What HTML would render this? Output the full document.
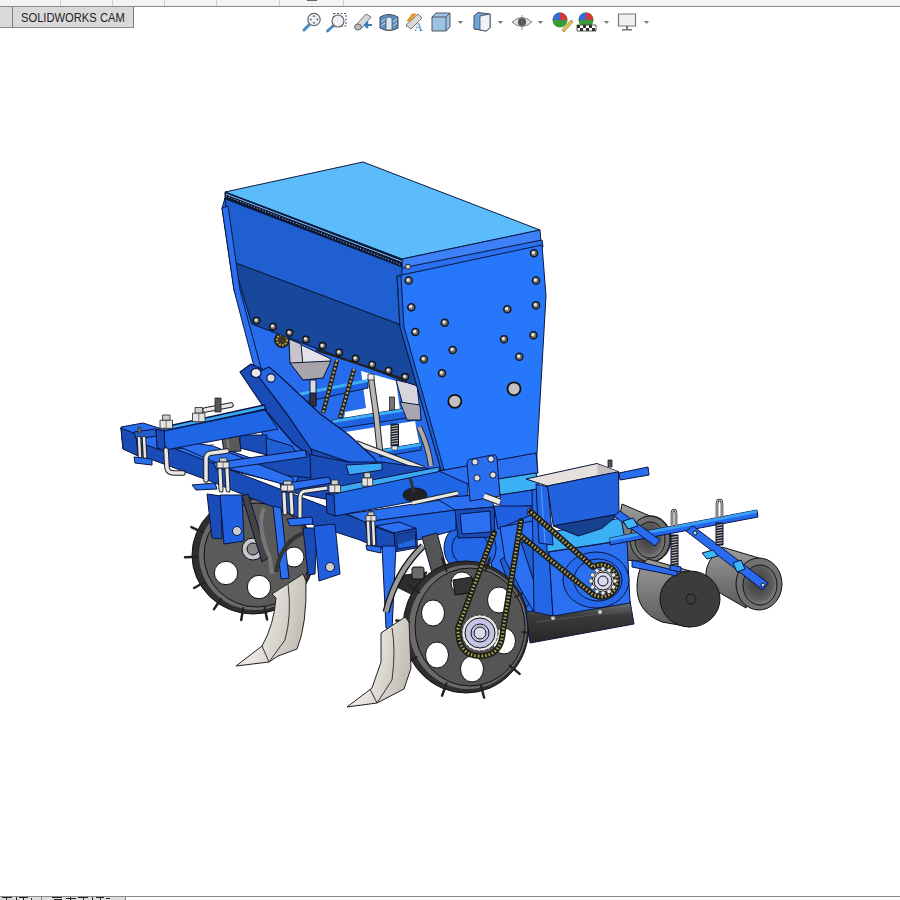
<!DOCTYPE html>
<html><head><meta charset="utf-8">
<style>
html,body{margin:0;padding:0;background:#fff;width:900px;height:900px;overflow:hidden;font-family:"Liberation Sans",sans-serif;}
#top{position:absolute;left:0;top:0;width:900px;height:6px;background:#f3f3f3;border-bottom:1px solid #8a8a8a;}
#tab0{position:absolute;left:0;top:7px;width:12px;height:20px;background:#d9d9d9;border-right:1px solid #7a7a7a;border-bottom:1px solid #8a8a8a;}
#tab{position:absolute;left:13px;top:7px;width:120px;height:20px;background:#d9d9d9;border-right:1px solid #7a7a7a;border-bottom:1px solid #8a8a8a;}
#tabtxt{position:absolute;left:21px;top:10px;font-size:13px;line-height:15px;color:#1e1e1e;white-space:nowrap;transform-origin:0 0;transform:scaleX(0.86);}
#bot{position:absolute;left:0;top:896px;width:900px;height:4px;background:#fff;border-top:1px solid #8a8a8a;}
svg{position:absolute;left:0;top:0;}
</style></head><body>
<div id="top"></div>
<div id="tab0"></div>
<div style="position:absolute;top:0;left:60px;width:1px;height:6px;background:#cfcfcf"></div>
<div style="position:absolute;top:0;left:112px;width:1px;height:6px;background:#cfcfcf"></div>
<div style="position:absolute;top:0;left:164px;width:1px;height:6px;background:#cfcfcf"></div>
<div style="position:absolute;top:0;left:216px;width:1px;height:6px;background:#cfcfcf"></div>
<div style="position:absolute;top:0;left:279px;width:1px;height:6px;background:#cfcfcf"></div>
<div style="position:absolute;top:0;left:343px;width:1px;height:6px;background:#cfcfcf"></div>
<div style="position:absolute;top:0;left:307px;width:10px;height:1px;background:#666"></div>
<div id="tab"></div><div id="tabtxt">SOLIDWORKS CAM</div>
<svg width="900" height="900" viewBox="0 0 900 900" stroke-linejoin="round">
<!-- TOOLBAR ICONS -->
<g id="icons">
<g>
<line x1="310" y1="24" x2="304" y2="30" stroke="#4a88c0" stroke-width="3" stroke-linecap="round"/>
<circle cx="314" cy="19.5" r="6.2" fill="#eef2f6" stroke="#666" stroke-width="1.2"/>
<path d="M314,15 l-1.5,1.8 h3 z M314,24 l-1.5,-1.8 h3 z M309.5,19.5 l1.8,-1.5 v3 z M318.5,19.5 l-1.8,-1.5 v3 z" fill="#555"/>
</g>
<g>
<rect x="333.5" y="13.5" width="12.5" height="12.5" fill="none" stroke="#555" stroke-width="1" stroke-dasharray="2,1.5"/>
<line x1="333" y1="26" x2="327.5" y2="31" stroke="#4a88c0" stroke-width="3" stroke-linecap="round"/>
<circle cx="338" cy="21" r="6" fill="#eef2f6" stroke="#666" stroke-width="1.2"/>
</g>
<g>
<path d="M356,25 L366,14 L371,17 L362,28 Z" fill="#d8d8d8" stroke="#777" stroke-width="1"/>
<ellipse cx="358" cy="27" rx="3.5" ry="3" fill="#bbb" stroke="#666"/>
<path d="M372,25 h-6 m2,-3 l-3,3 l3,3" fill="none" stroke="#3a7ab8" stroke-width="2.2"/>
</g>
<g>
<path d="M380,17 Q389,12 398,17 L398,28 Q389,33 380,28 Z" fill="#5a90c0" stroke="#445" stroke-width="1"/>
<path d="M386,18 Q389,16 392,18 L392,30 L386,30 Z" fill="#dfe6ec" stroke="#556" stroke-width="0.8"/>
<path d="M381,22 l4,-3 M381,26 l4,-3 M393,22 l4,-3 M393,26 l4,-3" stroke="#cde" stroke-width="1"/>
</g>
<g>
<path d="M412,14 L407,21 L411,21 L406,27 L416,19 L412,19 L416,14 Z" fill="#f0a020" stroke="#c07010" stroke-width="0.6"/>
<path d="M406,25 L418,14 L422,18 L411,29 Z" fill="#d8d8d8" stroke="#777"/>
<text x="414" y="31" font-family="Liberation Serif,serif" font-size="12" fill="#3a7ab8">A</text>
</g>
<g>
<path d="M432,17 L436,13 L450,13 L450,27 L446,31 L432,31 Z" fill="#9cc4e4" stroke="#556" stroke-width="1"/>
<path d="M432,17 L446,17 L450,13 M446,17 L446,31" fill="none" stroke="#556" stroke-width="1"/>
</g>
<path d="M458,21 h5 l-2.5,3 z" fill="#777"/>
<g>
<path d="M474,16 L478,12.5 L490,14 L490,28 L486,31 L474,29 Z" fill="#6aa6d8" stroke="#445" stroke-width="1"/>
<path d="M480,16 L490,14 L490,28 L486,31 L480,30 Z" fill="#eef3f7" stroke="#445" stroke-width="0.8"/>
</g>
<path d="M498,21 h5 l-2.5,3 z" fill="#777"/>
<g>
<path d="M512,22 Q522,13 532,22 Q522,31 512,22 Z" fill="#e0e0e0" stroke="#888" stroke-width="1"/>
<circle cx="522" cy="22" r="4" fill="#555"/>
<line x1="522" y1="15" x2="522" y2="30" stroke="#777" stroke-width="0.8"/>
</g>
<path d="M538,21 h5 l-2.5,3 z" fill="#777"/>
<g>
<circle cx="560" cy="20" r="7.5" fill="#3a9a3a"/>
<path d="M560,20 L552.5,20 A7.5,7.5 0 0 1 560,12.5 Z" fill="#3a6ad0"/>
<path d="M560,20 L560,12.5 A7.5,7.5 0 0 1 567.5,20 Z" fill="#d03a3a"/>
<path d="M562,30 L571,20 L573,22 L564,32 Z" fill="#f0c040" stroke="#886" stroke-width="0.8"/>
</g>
<g>
<circle cx="586" cy="20" r="7.5" fill="#3a9a3a"/>
<path d="M586,20 L578.5,20 A7.5,7.5 0 0 1 586,12.5 Z" fill="#3a6ad0"/>
<path d="M586,20 L586,12.5 A7.5,7.5 0 0 1 593.5,20 Z" fill="#d03a3a"/>
<rect x="577" y="25" width="19" height="6" fill="#fff" stroke="#333" stroke-width="0.8"/>
<path d="M577,25 h3v3h-3z M583,25 h3v3h-3z M589,25 h3v3h-3z M580,28 h3v3h-3z M586,28 h3v3h-3z M592,28 h3v3h-3z" fill="#333"/>
</g>
<path d="M604,21 h5 l-2.5,3 z" fill="#777"/>
<g>
<rect x="618.5" y="14" width="17" height="12" fill="#f0f0f0" stroke="#777" stroke-width="1.2"/>
<rect x="626" y="26" width="2" height="3" fill="#777"/>
<rect x="622" y="29" width="10" height="1.5" fill="#777"/>
</g>
<path d="M644,21 h5 l-2.5,3 z" fill="#777"/>
</g>
<!-- BACK ROLLERS -->
<defs>
<linearGradient id="gshoe" x1="0" y1="0" x2="1" y2="0.3"><stop offset="0" stop-color="#f4f2ee"/><stop offset="0.5" stop-color="#e8e5df"/><stop offset="1" stop-color="#c4c0b8"/></linearGradient>
<linearGradient id="gcyl" x1="0" y1="0" x2="0" y2="1">
<stop offset="0" stop-color="#9c9c9c"/><stop offset="0.5" stop-color="#7a7a7a"/><stop offset="1" stop-color="#5a5a5a"/>
</linearGradient>
<radialGradient id="gface" cx="0.45" cy="0.45" r="0.6">
<stop offset="0" stop-color="#3a3a3a"/><stop offset="0.7" stop-color="#5e5e5e"/><stop offset="1" stop-color="#8a8a8a"/>
</radialGradient>
</defs>
<g id="rollers" stroke="#111" stroke-width="1">
<path d="M622,504 L650,516 A20,23 0 0 1 652,562 L625,560 Q615,530 622,504 Z" fill="url(#gcyl)"/>
<ellipse cx="650" cy="539" rx="20" ry="23" fill="#6e6e6e"/>
<ellipse cx="650" cy="540" rx="15" ry="18" fill="url(#gface)"/>
<path d="M722,547 L759,558 L746,608 L708,586 Q700,565 722,547 Z" fill="url(#gcyl)"/>
<ellipse cx="759" cy="584" rx="23" ry="26" fill="#707070"/>
<ellipse cx="760" cy="585" rx="17" ry="20" fill="url(#gface)"/>
<path d="M648,559 L690,571 L690,627 L662,622 Q636,612 637,585 Q638,565 648,559 Z" fill="url(#gcyl)"/>
<ellipse cx="690" cy="599" rx="30" ry="28" fill="#3c3c3c"/>
<circle cx="691" cy="599" r="5" fill="none" stroke="#1a1a1a"/>
</g>
<!-- GEARBOX back parts -->
<g id="gearback" stroke="#0a1440" stroke-width="1">
<polygon points="488,512 540,508 560,600 522,615 492,572" fill="#2a6ef0"/>
<polygon points="500,560 524,545 535,600 520,612" fill="#1f5fd0"/>
<circle cx="470" cy="548" r="26" fill="#2366e6"/>
<circle cx="470" cy="548" r="18" fill="none"/>
</g>
<!-- HOPPER -->
<g id="hopper" stroke="#0a1a40" stroke-width="1">
<polygon points="225,198 233,262 252,324 417,386 446,472 330,475 262,440 262,372 234,290 222,208" fill="#276cec"/>
<polygon points="361,371 396,381 400,410 344,419.5 345,412 366,408" fill="#fff" stroke="none"/>
<polygon points="345,432 415,421 420,447 384,451 357,445" fill="#fff" stroke="none"/>
<polygon points="298,394 368,380 368,388 300,403" fill="#1f62e0"/>
<polygon points="298,393 368,379 368,382 298,396" fill="#3fb0f5" stroke="none"/>
<polygon points="333,420 407,408 407,418 335,429" fill="#1f62e0"/>
<polygon points="333,420 407,408 407,411 333,423" fill="#3fb0f5" stroke="none"/>
<polygon points="379,450 421,443 421,450 380,457" fill="#1f62e0"/>
<polygon points="379,450 421,443 421,446 379,453" fill="#3fb0f5" stroke="none"/>
<circle cx="282" cy="340" r="7.5" fill="#3a3520" stroke="#111"/><circle cx="282" cy="340" r="5" fill="none" stroke="#b0a460" stroke-width="2" stroke-dasharray="1.5,1.5"/>
<polygon points="289,339 331,359 323,378 303,380 290,363" fill="#e4e2e8"/>
<polygon points="289,339 301,344 303,366 290,363" fill="#c8c6cc"/>
<polygon points="290,363 331,361 323,378 303,380" fill="#a8a4ac"/>
<rect x="310" y="380" width="6" height="26" fill="#ddd"/>
<rect x="310" y="393" width="6" height="13" fill="#333"/>
<g stroke="#222" stroke-width="4.5"><line x1="337" y1="360" x2="323" y2="413"/><line x1="354" y1="369" x2="340" y2="418"/></g><g stroke="#b8ae70" stroke-width="2" stroke-dasharray="2,2"><line x1="337" y1="360" x2="323" y2="413"/><line x1="354" y1="369" x2="340" y2="418"/></g>
<path d="M371,378 Q377,415 380,452" fill="none" stroke="#222" stroke-width="6.5"/>
<path d="M371,378 Q377,415 380,452" fill="none" stroke="#b8b8b8" stroke-width="4.5"/>
<rect x="368" y="374" width="6" height="6" fill="#eee" stroke="#222" stroke-width="0.8"/>
<polygon points="396,380 417,385 421,420 407,420" fill="#d8d6dc"/>
<polygon points="400,402 420,405 421,420 407,420" fill="#a8a6b0"/>
<path d="M419,427 Q428,445 431,466" fill="none" stroke="#222" stroke-width="6"/>
<path d="M419,427 Q428,445 431,466" fill="none" stroke="#aaa" stroke-width="4"/>
<rect x="391" y="424" width="7.5" height="22" fill="#222"/><line x1="391.5" y1="426.5" x2="398" y2="425.5" stroke="#ddd" stroke-width="0.9"/><line x1="391.5" y1="429.0" x2="398" y2="428.0" stroke="#ddd" stroke-width="0.9"/><line x1="391.5" y1="431.5" x2="398" y2="430.5" stroke="#ddd" stroke-width="0.9"/><line x1="391.5" y1="434.0" x2="398" y2="433.0" stroke="#ddd" stroke-width="0.9"/><line x1="391.5" y1="436.5" x2="398" y2="435.5" stroke="#ddd" stroke-width="0.9"/><line x1="391.5" y1="439.0" x2="398" y2="438.0" stroke="#ddd" stroke-width="0.9"/><line x1="391.5" y1="441.5" x2="398" y2="440.5" stroke="#ddd" stroke-width="0.9"/><line x1="391.5" y1="444.0" x2="398" y2="443.0" stroke="#ddd" stroke-width="0.9"/><rect x="392" y="446" width="5.5" height="4" fill="#e8e8f0" stroke="#222" stroke-width="0.6"/><rect x="389.5" y="397" width="5" height="13" fill="#777" stroke="#222" stroke-width="0.8"/>
<path d="M356,443 L424,469" stroke="#222" stroke-width="6"/>
<path d="M356,443 L424,469" stroke="#e6e6e6" stroke-width="4"/>
<polygon points="225,192 363,162 540,230 402,259" fill="#5cbcfb"/>
<polygon points="402,259 540,230 541,243 402,272" fill="#3d80f7"/>
<polygon points="402,268 542,240 543,247 397,276" fill="#2a70f0"/>
<polygon points="225,192 402,259 402,267 225,199" fill="#0d1838"/>
<line x1="226" y1="194" x2="402" y2="261.5" stroke="#7cc4ff" stroke-width="1"/>
<line x1="226" y1="196" x2="402" y2="265" stroke="#9aa" stroke-width="1.2" stroke-dasharray="1,2"/>
<polygon points="225,199 402,267 401,325 233,262" fill="#1f5fcf"/>
<polygon points="233,262 401,325 417,386 252,324" fill="#17489c"/>
<polygon points="222,208 228,206 240,290 262,372 256,374 234,290" fill="#2a70f0"/>
<line x1="316" y1="350" x2="407" y2="380" stroke="#222" stroke-width="2"/>
<polygon points="397,276 542,245 546,296 537,453 537,472 441,470 400,327" fill="#2677fa"/>
<polygon points="397,276 401,276 404,327 444,470 441,470 400,327" fill="#1f5fd0"/>
<line x1="441" y1="472" x2="537" y2="453"/>
</g>
<g id="bolts"><circle cx="534" cy="253.3" r="3.6" fill="#6e6a6a" stroke="#111" stroke-width="1.3"/><circle cx="533.4" cy="252.70000000000002" r="1.6" fill="#e8e8e8" stroke="none"/><circle cx="408.7" cy="280.5" r="3.6" fill="#6e6a6a" stroke="#111" stroke-width="1.3"/><circle cx="408.09999999999997" cy="279.9" r="1.6" fill="#e8e8e8" stroke="none"/><circle cx="536" cy="280.5" r="3.6" fill="#6e6a6a" stroke="#111" stroke-width="1.3"/><circle cx="535.4" cy="279.9" r="1.6" fill="#e8e8e8" stroke="none"/><circle cx="411.3" cy="307.2" r="3.6" fill="#6e6a6a" stroke="#111" stroke-width="1.3"/><circle cx="410.7" cy="306.59999999999997" r="1.6" fill="#e8e8e8" stroke="none"/><circle cx="536" cy="305.3" r="3.6" fill="#6e6a6a" stroke="#111" stroke-width="1.3"/><circle cx="535.4" cy="304.7" r="1.6" fill="#e8e8e8" stroke="none"/><circle cx="507.3" cy="309.3" r="3.6" fill="#6e6a6a" stroke="#111" stroke-width="1.3"/><circle cx="506.7" cy="308.7" r="1.6" fill="#e8e8e8" stroke="none"/><circle cx="444.7" cy="322.7" r="3.6" fill="#6e6a6a" stroke="#111" stroke-width="1.3"/><circle cx="444.09999999999997" cy="322.09999999999997" r="1.6" fill="#e8e8e8" stroke="none"/><circle cx="415.3" cy="332" r="3.6" fill="#6e6a6a" stroke="#111" stroke-width="1.3"/><circle cx="414.7" cy="331.4" r="1.6" fill="#e8e8e8" stroke="none"/><circle cx="504" cy="339.2" r="3.6" fill="#6e6a6a" stroke="#111" stroke-width="1.3"/><circle cx="503.4" cy="338.59999999999997" r="1.6" fill="#e8e8e8" stroke="none"/><circle cx="533.5" cy="335.2" r="3.6" fill="#6e6a6a" stroke="#111" stroke-width="1.3"/><circle cx="532.9" cy="334.59999999999997" r="1.6" fill="#e8e8e8" stroke="none"/><circle cx="452.7" cy="349.9" r="3.6" fill="#6e6a6a" stroke="#111" stroke-width="1.3"/><circle cx="452.09999999999997" cy="349.29999999999995" r="1.6" fill="#e8e8e8" stroke="none"/><circle cx="423.9" cy="359.2" r="3.6" fill="#6e6a6a" stroke="#111" stroke-width="1.3"/><circle cx="423.29999999999995" cy="358.59999999999997" r="1.6" fill="#e8e8e8" stroke="none"/><circle cx="519.3" cy="356.8" r="3.6" fill="#6e6a6a" stroke="#111" stroke-width="1.3"/><circle cx="518.6999999999999" cy="356.2" r="1.6" fill="#e8e8e8" stroke="none"/><circle cx="442" cy="373.3" r="3.6" fill="#6e6a6a" stroke="#111" stroke-width="1.3"/><circle cx="441.4" cy="372.7" r="1.6" fill="#e8e8e8" stroke="none"/><circle cx="256.6" cy="320.6" r="3.3" fill="#6e6a6a" stroke="#111" stroke-width="1.3"/><circle cx="256.0" cy="320.0" r="1.5" fill="#e8e8e8" stroke="none"/><circle cx="273" cy="326.7" r="3.3" fill="#6e6a6a" stroke="#111" stroke-width="1.3"/><circle cx="272.4" cy="326.09999999999997" r="1.5" fill="#e8e8e8" stroke="none"/><circle cx="289.6" cy="332.8" r="3.3" fill="#6e6a6a" stroke="#111" stroke-width="1.3"/><circle cx="289.0" cy="332.2" r="1.5" fill="#e8e8e8" stroke="none"/><circle cx="306" cy="339.4" r="3.3" fill="#6e6a6a" stroke="#111" stroke-width="1.3"/><circle cx="305.4" cy="338.79999999999995" r="1.5" fill="#e8e8e8" stroke="none"/><circle cx="322.6" cy="345.8" r="3.3" fill="#6e6a6a" stroke="#111" stroke-width="1.3"/><circle cx="322.0" cy="345.2" r="1.5" fill="#e8e8e8" stroke="none"/><circle cx="339.2" cy="352.4" r="3.3" fill="#6e6a6a" stroke="#111" stroke-width="1.3"/><circle cx="338.59999999999997" cy="351.79999999999995" r="1.5" fill="#e8e8e8" stroke="none"/><circle cx="355.6" cy="358.5" r="3.3" fill="#6e6a6a" stroke="#111" stroke-width="1.3"/><circle cx="355.0" cy="357.9" r="1.5" fill="#e8e8e8" stroke="none"/><circle cx="372.2" cy="364.6" r="3.3" fill="#6e6a6a" stroke="#111" stroke-width="1.3"/><circle cx="371.59999999999997" cy="364.0" r="1.5" fill="#e8e8e8" stroke="none"/><circle cx="388.6" cy="370.7" r="3.3" fill="#6e6a6a" stroke="#111" stroke-width="1.3"/><circle cx="388.0" cy="370.09999999999997" r="1.5" fill="#e8e8e8" stroke="none"/><circle cx="405.2" cy="376.8" r="3.3" fill="#6e6a6a" stroke="#111" stroke-width="1.3"/><circle cx="404.59999999999997" cy="376.2" r="1.5" fill="#e8e8e8" stroke="none"/><circle cx="454.8" cy="401.3" r="6.5" fill="#c4c0c0" stroke="#111" stroke-width="1.8"/><circle cx="514" cy="388.8" r="6.5" fill="#c4c0c0" stroke="#111" stroke-width="1.8"/><circle cx="408" cy="266.7" r="2.5" fill="#ccc" stroke="#222"/></g>
<!-- LEVER -->
<g id="lever" stroke="#0a1440" stroke-width="1.2">
<path d="M240,372 L251,364 L262,369 L320,414 L349,436 L379,465 L349,477 L313,458 L294,444 L267,412 Z" fill="#1a4cb8"/>
<path d="M256,373 L269,367 L278,374.5 L320,413.7 L349,435 L374,458 L379,465 L379,469 L349,476 L345,465 L320,454.6 L311,449 L286.6,413.7 Z" fill="#2366e6"/>
<polygon points="311,449 349,462 379,469 349,477 313,460" fill="#1a4cb8"/>
<ellipse cx="256" cy="373" rx="5" ry="4.5" fill="#e8e8e8"/>
<circle cx="271" cy="378" r="4.2" fill="#ddd"/>
</g>
<!-- LEFT WHEEL -->
<g id="lwheel" stroke="#111" stroke-width="1">
<g stroke="#222" stroke-width="2.5" stroke-linecap="round"><line x1="218.0" y1="506.7" x2="214.0" y2="500.9"/><line x1="197.7" y1="530.1" x2="191.4" y2="527.1"/><line x1="192.0" y1="557.1" x2="185.0" y2="557.3"/><line x1="200.2" y1="584.5" x2="194.1" y2="588.0"/><line x1="218.0" y1="603.3" x2="214.0" y2="609.1"/><line x1="242.4" y1="613.1" x2="241.2" y2="620.0"/><line x1="265.7" y1="612.7" x2="267.1" y2="619.6"/><line x1="288.0" y1="603.3" x2="292.0" y2="609.1"/></g>
<ellipse cx="253" cy="555" rx="61" ry="59" fill="#2e2e2e"/>
<ellipse cx="255" cy="555" rx="56" ry="55" fill="#6a6a6a" stroke="none"/>
<ellipse cx="257" cy="555" rx="53" ry="52" fill="#5a5a5a"/>
<g stroke="#222" stroke-width="2"><line x1="221.5" y1="511.6" x2="218.0" y2="506.7"/><line x1="203.2" y1="532.6" x2="197.7" y2="530.1"/><line x1="198.0" y1="556.8" x2="192.0" y2="557.1"/><line x1="205.4" y1="581.5" x2="200.2" y2="584.5"/><line x1="221.5" y1="598.4" x2="218.0" y2="603.3"/><line x1="243.4" y1="607.2" x2="242.4" y2="613.1"/><line x1="264.4" y1="606.8" x2="265.7" y2="612.7"/><line x1="284.5" y1="598.4" x2="288.0" y2="603.3"/></g>
<circle cx="226" cy="573" r="11.7" fill="#fff"/>
<circle cx="259" cy="587" r="11.7" fill="#fff"/>
<circle cx="294" cy="557" r="10" fill="#fff"/>
<circle cx="253" cy="549" r="11" fill="#c8c8d0"/>
<circle cx="253" cy="549" r="6" fill="#888"/>
</g>
<!-- FRAME -->
<g id="frame" stroke="#0a1440" stroke-width="1">
<polygon points="290,450 312,455 348,462 382,462 440,470 440,490 330,500 290,492" fill="#1a4cb8"/>
<polygon points="346,465 382,463 382,470 349,475" fill="#3aa8f5"/>
<polygon points="165,450 213,445 300,475 293,486 217,467 180,456" fill="#2a70f0"/>
<polygon points="205,446 222,450 238,452 221,444" fill="#fff" stroke="none"/>
<polygon points="240,435 267,435 267,455 240,448" fill="#1a4cb8"/>
<polygon points="266,438 292,446 302,462 267,457" fill="#1f5fd0"/>
<polygon points="222,438 239,436 241,451 224,452" fill="#5a5a5a"/>
<line x1="227" y1="438" x2="229" y2="451" stroke="#888" stroke-width="1.5"/>
<polygon points="260,457 307,451 310,456 311,478 260,473" fill="#1a4cb8"/>

<polygon points="121,428 376,526 376,547 360,540 314,525 283,511 210,481 123,449" fill="#1a4cb8"/>
<polygon points="157,437 213,446 293,478 293,487 233,470" fill="#2a70f0"/>
<polygon points="121,427 143,423 162,429 165,452 136,441 121,429" fill="#2a6ef0"/>
<polygon points="121,428 136,434 138,456 123,449" fill="#1a4cb8"/>
<polygon points="134,432 155,429 157,436 136,439" fill="#1f5fd0"/>
<rect x="138" y="427" width="3" height="6" fill="#666" stroke="#222" stroke-width="0.6"/>
<polygon points="164,427 264,405 266,409 164,431" fill="#3aa8f5" stroke-width="1.5"/>
<polygon points="164,431 265,410 278,429 165,450" fill="#1f66e6"/>
<polygon points="156,429 164,431 165,450 157,448" fill="#1a4cb8"/>
<polygon points="213,463 305,450 307,457 217,470" fill="#2a70f0"/>
<polygon points="280,484 329,477 331,483 282,492" fill="#2a70f0"/>
<polygon points="326,494 439,471 468,466 468,496 410,502 335,516" fill="#1f66e6"/>
<polygon points="330,488 439,467 439,471.5 334,494" fill="#3aa8f5"/>
<polygon points="326,494 334,495 335,516 327,513" fill="#1a4cb8"/>
<polygon points="439,471 536,453 538,473 499,479 468,484" fill="#2a70f0"/>
<polygon points="498,479 536,473 539,489 500,495" fill="#3bb0f5"/>
<polygon points="500,495 539,489 539,505 500,508" fill="#2366e6"/>
<polygon points="347,514 454,498 456,510 365,522" fill="#2a70f0"/>
<polygon points="365,522 456,510 456,530 418,540 370,543" fill="#2366e6"/>
<polygon points="375.5,526 399,522 416,528.3 394.2,533" fill="#2a70f0"/>
<polygon points="375.5,527 394.2,533.8 395,551.7 376.3,547" fill="#1a4cb8"/>
<polygon points="394.2,533 416,528.3 417.5,547.8 395.8,551.7" fill="#1a4cb8"/>
<polygon points="396.5,535 415,531 416,546 397.5,549" fill="#2266e0"/>
<polygon points="396.5,535 415,531 415,539 397,545" fill="#17459e" stroke="none"/>
<polygon points="366,545 381,547 381,553 367,550" fill="#2a70f0"/>
<polygon points="436,498 490,494 494,507 455,510" fill="#2a70f0"/>
<polygon points="455,510 494,507 495,537 458,538" fill="#1a4cb8"/>
<polygon points="460,514 490,511 491,532 462,534" fill="#2a70f0"/>
<polygon points="422,537 437,533 447,570 432,573" fill="#555"/>


<path d="M467,464 Q467,459 472,459 L492,455 Q497,454 497,459 L500,496 L470,501 Z" fill="#2a6ef0"/>
<circle cx="475" cy="462" r="3.2" fill="#ddd"/><circle cx="491" cy="459" r="3.2" fill="#ddd"/>
<circle cx="477" cy="478" r="3.2" fill="#ddd"/><circle cx="493" cy="475" r="3.2" fill="#ddd"/>
<ellipse cx="415" cy="495" rx="12" ry="7" fill="#222"/>
<line x1="410" y1="478" x2="414" y2="492" stroke="#333" stroke-width="3"/>
<path d="M412,503 L458,493" stroke="#222" stroke-width="5"/>
<path d="M412,503 L458,493" stroke="#e8e8e8" stroke-width="3"/>
<path d="M484,496 L500,502" stroke="#222" stroke-width="7"/>
<path d="M484,496 L500,502" stroke="#eee" stroke-width="5"/>
<polygon points="494,506 534,506 536,513 498,529" fill="#2060e0"/>
<circle cx="531" cy="512" r="4" fill="#ccc"/>
<path d="M300,522 L300,498 Q300,491 306,491 L327,488" fill="none" stroke="#222" stroke-width="5"/>
<path d="M300,522 L300,498 Q300,491 306,491 L327,488" fill="none" stroke="#e8e8e8" stroke-width="3"/>
</g>
<!-- DETAILS -->
<g id="details"><path d="M205,410 L231,405" fill="none" stroke="#222" stroke-width="5.5" stroke-linecap="round" stroke-linejoin="round"/><path d="M205,410 L231,405" fill="none" stroke="#e8e6e6" stroke-width="3.5" stroke-linecap="round" stroke-linejoin="round"/><rect x="215" y="398" width="6" height="14" fill="#555" stroke="#222" stroke-width="0.8"/><rect x="162.5" y="415.0" width="7.5" height="5.3" fill="#cfcfcf" stroke="#222" stroke-width="0.8"/><rect x="160.0" y="420.3" width="12.5" height="8.0" fill="#e6e2e2" stroke="#222" stroke-width="0.8"/><line x1="166.2" y1="420.3" x2="166.2" y2="428.3" stroke="#555" stroke-width="0.8"/><rect x="195.0" y="407.5" width="7.5" height="5.7" fill="#cfcfcf" stroke="#222" stroke-width="0.8"/><rect x="192.5" y="413.2" width="12.5" height="8.5" fill="#e6e2e2" stroke="#222" stroke-width="0.8"/><line x1="198.8" y1="413.2" x2="198.8" y2="421.7" stroke="#555" stroke-width="0.8"/><path d="M139,438 L140,457" fill="none" stroke="#222" stroke-width="4.5" stroke-linecap="round" stroke-linejoin="round"/><path d="M139,438 L140,457" fill="none" stroke="#e8e6e6" stroke-width="2.5" stroke-linecap="round" stroke-linejoin="round"/><path d="M144,438 L145,457" fill="none" stroke="#222" stroke-width="4.5" stroke-linecap="round" stroke-linejoin="round"/><path d="M144,438 L145,457" fill="none" stroke="#e8e6e6" stroke-width="2.5" stroke-linecap="round" stroke-linejoin="round"/><polygon points="134,457 152,459 152,465 135,463" fill="#2a6ef0" stroke="#0a1440" stroke-width="1"/><path d="M166,450 L167,468 Q168,473 174,473 L183,473" fill="none" stroke="#222" stroke-width="5.5" stroke-linecap="round" stroke-linejoin="round"/><path d="M166,450 L167,468 Q168,473 174,473 L183,473" fill="none" stroke="#e8e6e6" stroke-width="3.5" stroke-linecap="round" stroke-linejoin="round"/><path d="M206,480 L206,458 Q207,453 212,453 L227,451" fill="none" stroke="#222" stroke-width="5.5" stroke-linecap="round" stroke-linejoin="round"/><path d="M206,480 L206,458 Q207,453 212,453 L227,451" fill="none" stroke="#e8e6e6" stroke-width="3.5" stroke-linecap="round" stroke-linejoin="round"/><path d="M220,470 L221,490" fill="none" stroke="#222" stroke-width="5" stroke-linecap="round" stroke-linejoin="round"/><path d="M220,470 L221,490" fill="none" stroke="#e8e6e6" stroke-width="3" stroke-linecap="round" stroke-linejoin="round"/><path d="M227,469 L228,490" fill="none" stroke="#222" stroke-width="5" stroke-linecap="round" stroke-linejoin="round"/><path d="M227,469 L228,490" fill="none" stroke="#e8e6e6" stroke-width="3" stroke-linecap="round" stroke-linejoin="round"/><rect x="219.6" y="458.0" width="7.2" height="4.0" fill="#cfcfcf" stroke="#222" stroke-width="0.8"/><rect x="217.0" y="462.0" width="12.0" height="6.0" fill="#e6e2e2" stroke="#222" stroke-width="0.8"/><line x1="223.0" y1="462.0" x2="223.0" y2="468.0" stroke="#555" stroke-width="0.8"/><path d="M284,494 L285,513" fill="none" stroke="#222" stroke-width="5" stroke-linecap="round" stroke-linejoin="round"/><path d="M284,494 L285,513" fill="none" stroke="#e8e6e6" stroke-width="3" stroke-linecap="round" stroke-linejoin="round"/><path d="M291,494 L292,513" fill="none" stroke="#222" stroke-width="5" stroke-linecap="round" stroke-linejoin="round"/><path d="M291,494 L292,513" fill="none" stroke="#e8e6e6" stroke-width="3" stroke-linecap="round" stroke-linejoin="round"/><rect x="283.6" y="481.0" width="7.8" height="4.0" fill="#cfcfcf" stroke="#222" stroke-width="0.8"/><rect x="281.0" y="485.0" width="13.0" height="6.0" fill="#e6e2e2" stroke="#222" stroke-width="0.8"/><line x1="287.5" y1="485.0" x2="287.5" y2="491.0" stroke="#555" stroke-width="0.8"/><rect x="331.3" y="480.0" width="6.9" height="5.0" fill="#cfcfcf" stroke="#222" stroke-width="0.8"/><rect x="329.0" y="485.0" width="11.5" height="7.5" fill="#e6e2e2" stroke="#222" stroke-width="0.8"/><line x1="334.8" y1="485.0" x2="334.8" y2="492.5" stroke="#555" stroke-width="0.8"/><rect x="364.1" y="472.7" width="6.4" height="5.3" fill="#cfcfcf" stroke="#222" stroke-width="0.8"/><rect x="362.0" y="478.0" width="10.7" height="8.0" fill="#e6e2e2" stroke="#222" stroke-width="0.8"/><line x1="367.4" y1="478.0" x2="367.4" y2="486.0" stroke="#555" stroke-width="0.8"/><path d="M368,522 L369,544" fill="none" stroke="#222" stroke-width="4.5" stroke-linecap="round" stroke-linejoin="round"/><path d="M368,522 L369,544" fill="none" stroke="#e8e6e6" stroke-width="2.5" stroke-linecap="round" stroke-linejoin="round"/><path d="M373,521 L374,544" fill="none" stroke="#222" stroke-width="4.5" stroke-linecap="round" stroke-linejoin="round"/><path d="M373,521 L374,544" fill="none" stroke="#e8e6e6" stroke-width="2.5" stroke-linecap="round" stroke-linejoin="round"/><rect x="368.0" y="512.0" width="6.0" height="3.6" fill="#cfcfcf" stroke="#222" stroke-width="0.8"/><rect x="366.0" y="515.6" width="10.0" height="5.4" fill="#e6e2e2" stroke="#222" stroke-width="0.8"/><line x1="371.0" y1="515.6" x2="371.0" y2="521.0" stroke="#555" stroke-width="0.8"/></g>
<!-- LEFT BRACKETS, SHANK, SHOE -->
<g id="lshoe" stroke="#0a1440" stroke-width="1">
<polygon points="207,494 221,496 222,539 212,538" fill="#1a4cb8"/>
<polygon points="220,495 242,495 244,541 224,544" fill="#2060e0"/>
<circle cx="237" cy="531" r="4.5" fill="#ccc"/>
<polygon points="192,485 215,483 217,489 196,490" fill="#2a70f0"/>
<polygon points="242,496 248,494 268,558 262,562" fill="#444"/>
<polygon points="273,506 281,508 289,578 281,579" fill="#2a70f0"/>
<path d="M264,508 Q256,526 270,558 L272,574" fill="none" stroke="#777" stroke-width="4"/>
<path d="M304,533 Q282,540 276,572" fill="none" stroke="#333" stroke-width="4"/>
<polygon points="303,528 317,528 315,574 308,575" fill="#1a4cb8"/>
<polygon points="314,526 335,524 340,574 319,581" fill="#2060e0"/>
<circle cx="330" cy="567" r="4.5" fill="#ccc"/>
<polygon points="287,519 312,517 313,524 290,526" fill="#2a70f0"/>
<path d="M272,594 L303,574 L306,581 Q307,625 297,649 L278,656 L269,662 L236,666 L262,646 Q274,625 276,598 Z" fill="url(#gshoe)" stroke="#222"/>
<path d="M288,584 Q292,615 285,640 L269,662" fill="none" stroke="#333"/>
<path d="M262,646 L269,662" fill="none" stroke="#333"/>
</g>
<!-- RIGHT WHEEL -->
<polygon points="397,587 405,575 427,572 415,596" fill="#2e2e2e" stroke="#111"/><rect x="412" y="567" width="12" height="12" rx="2" fill="#6a6a6a" stroke="#111"/>
<g id="rwheel" stroke="#111" stroke-width="1">
<g stroke="#222" stroke-width="2.5" stroke-linecap="round"><line x1="411.4" y1="660.0" x2="405.4" y2="663.5"/><line x1="403.2" y1="621.2" x2="396.3" y2="620.6"/><line x1="414.4" y1="589.1" x2="408.7" y2="585.1"/><line x1="444.5" y1="565.0" x2="442.1" y2="558.4"/><line x1="487.5" y1="565.0" x2="489.9" y2="558.4"/><line x1="520.6" y1="594.0" x2="526.6" y2="590.5"/><line x1="528.8" y1="632.8" x2="535.7" y2="633.4"/><line x1="514.3" y1="669.4" x2="519.6" y2="673.9"/><line x1="482.3" y1="690.8" x2="484.1" y2="697.5"/><line x1="444.5" y1="689.0" x2="442.1" y2="695.6"/></g>
<ellipse cx="466" cy="627" rx="63" ry="66" fill="#2e2e2e"/>
<ellipse cx="468" cy="627" rx="59" ry="62" fill="#6a6a6a" stroke="none"/>
<ellipse cx="470" cy="627" rx="55" ry="59" fill="#555"/>
<g stroke="#222" stroke-width="2"><line x1="417.5" y1="656.5" x2="411.4" y2="660.0"/><line x1="410.2" y1="621.9" x2="403.2" y2="621.2"/><line x1="420.1" y1="593.2" x2="414.4" y2="589.1"/><line x1="446.8" y1="571.6" x2="444.5" y2="565.0"/><line x1="485.2" y1="571.6" x2="487.5" y2="565.0"/><line x1="514.5" y1="597.5" x2="520.6" y2="594.0"/><line x1="521.8" y1="632.1" x2="528.8" y2="632.8"/><line x1="508.9" y1="664.9" x2="514.3" y2="669.4"/><line x1="480.5" y1="684.0" x2="482.3" y2="690.8"/><line x1="446.8" y1="682.4" x2="444.5" y2="689.0"/></g>
<ellipse cx="433" cy="613" rx="11.5" ry="13" fill="#fff"/>
<ellipse cx="437" cy="655" rx="11.5" ry="13" fill="#fff"/>
<ellipse cx="472" cy="669" rx="11.5" ry="13" fill="#fff"/>
<ellipse cx="504" cy="641" rx="11.5" ry="13" fill="#fff"/>
<ellipse cx="499" cy="600" rx="11.5" ry="13" fill="#fff"/>
<circle cx="462" cy="583" r="11" fill="#fff"/>
<polygon points="453,580 472,577 474,592 455,595" fill="#333"/>
</g>
<!-- RIGHT SHOE -->
<g id="rshoe" stroke="#0a1440" stroke-width="1">
<polygon points="382,546 396,546 392,630 386,628" fill="#2a70f0"/>
<path d="M423,546 Q396,572 386,612" fill="none" stroke="#111" stroke-width="7"/><path d="M423,546 Q396,572 386,612" fill="none" stroke="#9a9a9a" stroke-width="4.5"/>
<path d="M381,633 L405,617 L409,622 L411,668 L404,689 L377,703 L347,707 L372,688 L381,662 Z" fill="url(#gshoe)" stroke="#222"/>
<path d="M392,628 Q396,650 392,680 L377,703" fill="none" stroke="#333"/>
<path d="M370,689 L377,703" fill="none" stroke="#333"/>
</g>
<!-- GEARBOX -->
<defs>
<linearGradient id="gbase" x1="0" y1="0" x2="0" y2="1">
<stop offset="0" stop-color="#7a7a7a"/><stop offset="0.35" stop-color="#3a3a3a"/><stop offset="1" stop-color="#262626"/>
</linearGradient>
</defs>
<g id="gearbox" stroke="#0a1440" stroke-width="1">
<polygon points="500,527 549,518 553,616 534,612 521,590 505,560" fill="#2a70f0"/>
<polygon points="521,542 532,545 543,586 536,588" fill="#1f5fd0"/>
<polygon points="526,612 630,601 634,624 530,643" fill="url(#gbase)"/>
<line x1="536" y1="622" x2="632" y2="610" stroke="#555"/>
<circle cx="553" cy="618" r="2" fill="#ccc" stroke="none"/><circle cx="600" cy="612" r="2" fill="#ccc" stroke="none"/>
<polygon points="532,490 549,486 549,552 553,616 534,612" fill="#2366e6"/>
<polygon points="549,552 627,540 630,603 553,616" fill="#2a70f0"/>
<polygon points="547,533 621,518 625,540 547,552" fill="#3bb0f5"/>
<ellipse cx="596" cy="580" rx="33" ry="28" fill="#2668ea"/>
<ellipse cx="598" cy="580" rx="24" ry="21" fill="#2a70f0"/>

<circle cx="603" cy="581" r="8.5" fill="#d8d8f0"/>
<polygon points="536,484 548,487 553,545 539,543" fill="#2366e6"/>
<line x1="541" y1="486" x2="545" y2="543" stroke="#5aa0ff" stroke-width="1"/>
<polygon points="526,479 597,463.5 618.5,471.7 547.5,486" fill="#e6e0dc"/>
<polygon points="597,464 618.5,471.7 612,473 598,475" fill="#c4c0c0" stroke="none"/>
<polygon points="547.5,486 618.5,471.7 619,514 553.3,526" fill="#2262dc"/>
<polygon points="553.3,526 619,514 602,528.3 578.3,536" fill="#17408e"/>
<rect x="608" y="460" width="4" height="7" fill="#555" stroke="#222" stroke-width="0.8"/>
<polygon points="619,473 648,467 649,475 620,480" fill="#2a6ef0"/>
<polygon points="610,538 757,510 758,517 610,545" fill="#2468ee"/>
<polygon points="610,538 757,510 757,513 610,541" fill="#3aa0f5" stroke="none"/>
<polygon points="614,516 620,511 660,540 655,546" fill="#2a6cf0"/>
<polygon points="623,521 633,518 638,526 628,529" fill="#3bb8f5"/>
<polygon points="686,531 693,526 768,583 763,590" fill="#2a6cf0"/>
<polygon points="733,563 741,560 745,569 737,572" fill="#3bb8f5"/>
<circle cx="695" cy="533" r="2" fill="#ddd"/><circle cx="763" cy="585" r="2" fill="#ddd"/>
<polygon points="632,560 677,571 677,576 632,567" fill="#2a6cf0"/>
<polygon points="702,553 713,550 718,556 707,559" fill="#3bb8f5"/>
<rect x="671.0" y="535" width="7" height="32" fill="#222"/><line x1="671.5" y1="537.5" x2="677.5" y2="536.5" stroke="#ddd" stroke-width="0.9"/><line x1="671.5" y1="540.1" x2="677.5" y2="539.1" stroke="#ddd" stroke-width="0.9"/><line x1="671.5" y1="542.7" x2="677.5" y2="541.7" stroke="#ddd" stroke-width="0.9"/><line x1="671.5" y1="545.3" x2="677.5" y2="544.3" stroke="#ddd" stroke-width="0.9"/><line x1="671.5" y1="547.9" x2="677.5" y2="546.9" stroke="#ddd" stroke-width="0.9"/><line x1="671.5" y1="550.5" x2="677.5" y2="549.5" stroke="#ddd" stroke-width="0.9"/><line x1="671.5" y1="553.1" x2="677.5" y2="552.1" stroke="#ddd" stroke-width="0.9"/><line x1="671.5" y1="555.7" x2="677.5" y2="554.7" stroke="#ddd" stroke-width="0.9"/><line x1="671.5" y1="558.3" x2="677.5" y2="557.3" stroke="#ddd" stroke-width="0.9"/><line x1="671.5" y1="560.9" x2="677.5" y2="559.9" stroke="#ddd" stroke-width="0.9"/><line x1="671.5" y1="563.5" x2="677.5" y2="562.5" stroke="#ddd" stroke-width="0.9"/><line x1="671.5" y1="566.1" x2="677.5" y2="565.1" stroke="#ddd" stroke-width="0.9"/><rect x="716.0" y="523" width="7" height="22" fill="#222"/><line x1="716.5" y1="525.5" x2="722.5" y2="524.5" stroke="#ddd" stroke-width="0.9"/><line x1="716.5" y1="528.1" x2="722.5" y2="527.1" stroke="#ddd" stroke-width="0.9"/><line x1="716.5" y1="530.7" x2="722.5" y2="529.7" stroke="#ddd" stroke-width="0.9"/><line x1="716.5" y1="533.3" x2="722.5" y2="532.3" stroke="#ddd" stroke-width="0.9"/><line x1="716.5" y1="535.9" x2="722.5" y2="534.9" stroke="#ddd" stroke-width="0.9"/><line x1="716.5" y1="538.5" x2="722.5" y2="537.5" stroke="#ddd" stroke-width="0.9"/><line x1="716.5" y1="541.1" x2="722.5" y2="540.1" stroke="#ddd" stroke-width="0.9"/><line x1="716.5" y1="543.7" x2="722.5" y2="542.7" stroke="#ddd" stroke-width="0.9"/><path d="M672,527 L672,514 Q672,510 674,510 Q676,510 676,514 L676,527" fill="none" stroke="#222" stroke-width="2.6"/><path d="M672,527 L672,514 Q672,510 674,510 Q676,510 676,514 L676,527" fill="none" stroke="#ccc" stroke-width="1.2"/><path d="M717,518 L717,504 Q717,500 719.5,500 Q722,500 722,504 L722,518" fill="none" stroke="#222" stroke-width="2.6"/><path d="M717,518 L717,504 Q717,500 719.5,500 Q722,500 722,504 L722,518" fill="none" stroke="#ccc" stroke-width="1.2"/><polygon points="670,565 681,567 681,572 670,570" fill="#2a6cf0" stroke="#0a1440"/>



</g>
<!-- CHAINS -->
<g id="chains" fill="none" stroke-linecap="round">
<circle cx="480" cy="633" r="18" fill="#e8e8e8" stroke="#333" stroke-width="1" stroke-dasharray="3,2"/>
<g stroke="#1e1e18" stroke-width="6">
<path d="M494,533 L458,628 Q458,656 480,656 Q502,656 503,630 L521,521"/>
<path d="M531,512 L593,567 A16,16 0 1 1 591,593 L521,536"/>
</g>
<g stroke="#b0a460" stroke-width="3" stroke-dasharray="1.5,2" stroke-linecap="butt">
<path d="M494,533 L458,628 Q458,656 480,656 Q502,656 503,630 L521,521"/>
<path d="M531,512 L593,567 A16,16 0 1 1 591,593 L521,536"/>
</g>
</g>
<g stroke="#111" stroke-width="1">
<circle cx="480" cy="633" r="15" fill="#c4c4e6"/>
<circle cx="480" cy="633" r="9" fill="none"/>
<circle cx="480" cy="633" r="6" fill="#d8d8ee"/>
<circle cx="603" cy="581" r="11" fill="#e0e0e0"/><circle cx="615.0" cy="581.0" r="2.2" fill="#e8e8e8" stroke="#333" stroke-width="0.7"/><circle cx="613.4" cy="587.0" r="2.2" fill="#e8e8e8" stroke="#333" stroke-width="0.7"/><circle cx="609.0" cy="591.4" r="2.2" fill="#e8e8e8" stroke="#333" stroke-width="0.7"/><circle cx="603.0" cy="593.0" r="2.2" fill="#e8e8e8" stroke="#333" stroke-width="0.7"/><circle cx="597.0" cy="591.4" r="2.2" fill="#e8e8e8" stroke="#333" stroke-width="0.7"/><circle cx="592.6" cy="587.0" r="2.2" fill="#e8e8e8" stroke="#333" stroke-width="0.7"/><circle cx="591.0" cy="581.0" r="2.2" fill="#e8e8e8" stroke="#333" stroke-width="0.7"/><circle cx="592.6" cy="575.0" r="2.2" fill="#e8e8e8" stroke="#333" stroke-width="0.7"/><circle cx="597.0" cy="570.6" r="2.2" fill="#e8e8e8" stroke="#333" stroke-width="0.7"/><circle cx="603.0" cy="569.0" r="2.2" fill="#e8e8e8" stroke="#333" stroke-width="0.7"/><circle cx="609.0" cy="570.6" r="2.2" fill="#e8e8e8" stroke="#333" stroke-width="0.7"/><circle cx="613.4" cy="575.0" r="2.2" fill="#e8e8e8" stroke="#333" stroke-width="0.7"/><circle cx="603" cy="581" r="9" fill="#d8d8f0"/>
<circle cx="603" cy="581" r="5" fill="none"/>
</g>
</svg>
<div id="bot"></div>
<div style="position:absolute;left:0;top:897px;width:41px;height:3px;background:#dedede"></div>
<div style="position:absolute;left:41px;top:897px;width:1px;height:3px;background:#888"></div>
<div style="position:absolute;left:42px;top:897px;width:83px;height:3px;background:#dedede"></div>
<div style="position:absolute;left:125px;top:897px;width:1px;height:3px;background:#888"></div>
<svg width="900" height="900" style="position:absolute;left:0;top:0"><g fill="#222">
<rect x="2" y="897" width="10" height="1"/><rect x="6" y="897" width="1" height="3"/><rect x="16" y="897" width="1" height="3"/><rect x="19" y="897" width="9" height="1"/><rect x="23" y="898" width="1" height="2"/><rect x="31" y="898" width="1" height="2"/>
<rect x="52" y="897" width="10" height="1"/><rect x="54" y="899" width="8" height="1"/><rect x="70" y="897" width="1" height="3"/><rect x="66" y="898" width="10" height="1"/><rect x="78" y="897" width="10" height="1"/><rect x="83" y="897" width="1" height="3"/><rect x="92" y="897" width="1" height="3"/><rect x="96" y="897" width="8" height="1"/><rect x="100" y="898" width="1" height="2"/><rect x="106" y="898" width="4" height="1"/>
</g></svg>
</body></html>
